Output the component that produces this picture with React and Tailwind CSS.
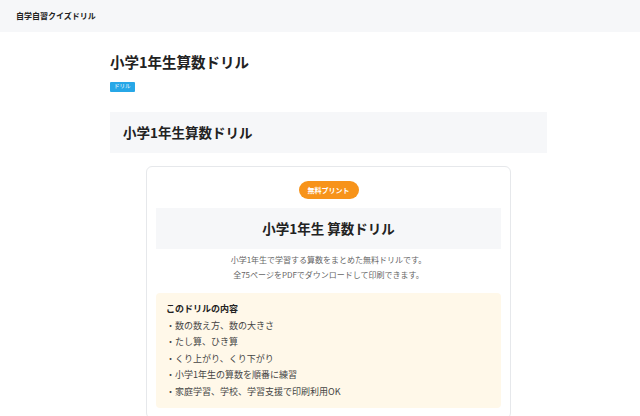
export default function App() {
  const items = [
    "数の数え方、数の大きさ",
    "たし算、ひき算",
    "くり上がり、くり下がり",
    "小学1年生の算数を順番に練習",
    "家庭学習、学校、学習支援で印刷利用OK",
  ];
  return (
    <div
      className="min-h-[416px] bg-white text-[#222]"
      style={{ fontFamily: '"Noto Sans CJK JP", "Noto Sans", sans-serif' }}
    >
      <header className="h-[32px] bg-[#f6f7f9] flex items-center pl-[16px]">
        <span className="text-[8px] font-bold text-[#222] leading-none">自学自習クイズドリル</span>
      </header>
      <main className="ml-[110px] w-[437px] pt-[21px]">
        <h1 className="text-[14.5px] font-bold leading-[18px] text-[#222]">小学1年生算数ドリル</h1>
        <div className="mt-[11px] flex">
          <span className="inline-flex items-center justify-center h-[10px] px-[4px] rounded-[1px] bg-[#27a7e7] text-white text-[5.5px] leading-none">
            ドリル
          </span>
        </div>
        <div className="mt-[20px] h-[41px] bg-[#f6f7f9] flex items-center pl-[13px]">
          <h2 className="text-[13.5px] font-bold leading-none text-[#222]">小学1年生算数ドリル</h2>
        </div>
        <div className="mt-[13px] mx-auto w-[365px] border border-[#e6e8eb] rounded-[6px] px-[9px] pt-[14px] pb-[10px]">
          <div className="flex justify-center">
            <span className="inline-flex items-center h-[18px] px-[9px] rounded-full bg-[#f7931a] text-white text-[7px] font-bold leading-none">
              無料プリント
            </span>
          </div>
          <div className="mt-[9px] h-[41px] bg-[#f6f7f9] flex items-center justify-center">
            <h3 className="text-[13.5px] font-bold leading-none text-[#222]">小学1年生 算数ドリル</h3>
          </div>
          <p className="mt-[3px] text-center text-[8px] leading-[15px] text-[#666]">
            小学1年生で学習する算数をまとめた無料ドリルです。
            <br />
            全75ページをPDFでダウンロードして印刷できます。
          </p>
          <div className="mt-[11px] bg-[#fff8e9] rounded-[4px] px-[10px] pt-[8px] pb-[8px]">
            <p className="text-[9px] font-bold leading-[16.5px] text-[#222]">このドリルの内容</p>
            <ul>
              {items.map((t) => (
                <li key={t} className="text-[9px] leading-[16.5px] text-[#444]">
                  ・{t}
                </li>
              ))}
            </ul>
          </div>
        </div>
      </main>
    </div>
  );
}
